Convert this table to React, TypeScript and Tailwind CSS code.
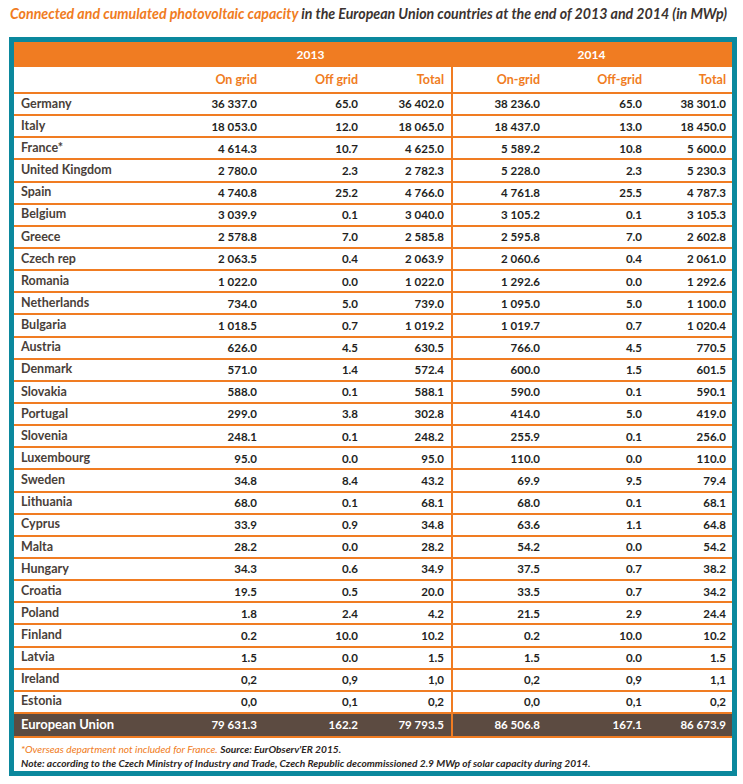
import React from 'react'

type Row = {
  name: string
  v: string[]
}

const rows: Row[] = [
  { name: 'Germany', v: ['36 337.0', '65.0', '36 402.0', '38 236.0', '65.0', '38 301.0'] },
  { name: 'Italy', v: ['18 053.0', '12.0', '18 065.0', '18 437.0', '13.0', '18 450.0'] },
  { name: 'France*', v: ['4 614.3', '10.7', '4 625.0', '5 589.2', '10.8', '5 600.0'] },
  { name: 'United Kingdom', v: ['2 780.0', '2.3', '2 782.3', '5 228.0', '2.3', '5 230.3'] },
  { name: 'Spain', v: ['4 740.8', '25.2', '4 766.0', '4 761.8', '25.5', '4 787.3'] },
  { name: 'Belgium', v: ['3 039.9', '0.1', '3 040.0', '3 105.2', '0.1', '3 105.3'] },
  { name: 'Greece', v: ['2 578.8', '7.0', '2 585.8', '2 595.8', '7.0', '2 602.8'] },
  { name: 'Czech rep', v: ['2 063.5', '0.4', '2 063.9', '2 060.6', '0.4', '2 061.0'] },
  { name: 'Romania', v: ['1 022.0', '0.0', '1 022.0', '1 292.6', '0.0', '1 292.6'] },
  { name: 'Netherlands', v: ['734.0', '5.0', '739.0', '1 095.0', '5.0', '1 100.0'] },
  { name: 'Bulgaria', v: ['1 018.5', '0.7', '1 019.2', '1 019.7', '0.7', '1 020.4'] },
  { name: 'Austria', v: ['626.0', '4.5', '630.5', '766.0', '4.5', '770.5'] },
  { name: 'Denmark', v: ['571.0', '1.4', '572.4', '600.0', '1.5', '601.5'] },
  { name: 'Slovakia', v: ['588.0', '0.1', '588.1', '590.0', '0.1', '590.1'] },
  { name: 'Portugal', v: ['299.0', '3.8', '302.8', '414.0', '5.0', '419.0'] },
  { name: 'Slovenia', v: ['248.1', '0.1', '248.2', '255.9', '0.1', '256.0'] },
  { name: 'Luxembourg', v: ['95.0', '0.0', '95.0', '110.0', '0.0', '110.0'] },
  { name: 'Sweden', v: ['34.8', '8.4', '43.2', '69.9', '9.5', '79.4'] },
  { name: 'Lithuania', v: ['68.0', '0.1', '68.1', '68.0', '0.1', '68.1'] },
  { name: 'Cyprus', v: ['33.9', '0.9', '34.8', '63.6', '1.1', '64.8'] },
  { name: 'Malta', v: ['28.2', '0.0', '28.2', '54.2', '0.0', '54.2'] },
  { name: 'Hungary', v: ['34.3', '0.6', '34.9', '37.5', '0.7', '38.2'] },
  { name: 'Croatia', v: ['19.5', '0.5', '20.0', '33.5', '0.7', '34.2'] },
  { name: 'Poland', v: ['1.8', '2.4', '4.2', '21.5', '2.9', '24.4'] },
  { name: 'Finland', v: ['0.2', '10.0', '10.2', '0.2', '10.0', '10.2'] },
  { name: 'Latvia', v: ['1.5', '0.0', '1.5', '1.5', '0.0', '1.5'] },
  { name: 'Ireland', v: ['0,2', '0,9', '1,0', '0,2', '0,9', '1,1'] },
  { name: 'Estonia', v: ['0,0', '0,1', '0,2', '0,0', '0,1', '0,2'] },
]

const total: Row = {
  name: 'European Union',
  v: ['79 631.3', '162.2', '79 793.5', '86 506.8', '167.1', '86 673.9'],
}

const cols = 'grid grid-cols-[156px_87px_101px_93px_89px_102px_90px]'

function Cells({ v }: { v: string[] }) {
  return (
    <>
      <div className="text-right">{v[0]}</div>
      <div className="text-right">{v[1]}</div>
      <div className="text-right pr-[7px]">{v[2]}</div>
      <div className="text-right self-stretch flex items-center justify-end border-l-2 border-[#f07c22]">{v[3]}</div>
      <div className="text-right">{v[4]}</div>
      <div className="text-right pr-[6px]">{v[5]}</div>
    </>
  )
}

export default function App() {
  return (
    <div className="w-[743px] h-[784px] bg-white pt-[2px] font-['Lato',sans-serif]">
      <div className="pl-[10px] h-[26px] leading-[24px] text-[14.2px] font-bold italic text-[#3b3330] whitespace-nowrap">
        <span className="text-[#f07c22]">Connected and cumulated photovoltaic capacity</span> in the European Union
        countries at the end of 2013 and 2014 (in MWp)
      </div>

      <div className="ml-[9px] mt-[9px] w-[728px] h-[739px] border-[5px] border-[#0b889d] flex flex-col">
        {/* year band */}
        <div className={`${cols} h-[25px] bg-[#f07c22] items-center text-white text-[12px] font-bold`}>
          <div />
          <div className="col-span-3 text-center">2013</div>
          <div className="col-span-3 text-center">2014</div>
        </div>

        {/* column titles */}
        <div className={`${cols} h-[27px] items-center border-b-2 border-[#f07c22] text-[#f07c22] text-[12.5px] font-bold`}>
          <div />
          <div className="text-right pt-[2px]">On grid</div>
          <div className="text-right pt-[2px]">Off grid</div>
          <div className="text-right pr-[7px] pt-[2px]">Total</div>
          <div className="self-stretch flex items-center justify-end border-l-2 border-[#f07c22] pt-[2px]">On-grid</div>
          <div className="text-right pt-[2px]">Off-grid</div>
          <div className="text-right pr-[6px] pt-[2px]">Total</div>
        </div>

        {rows.map((r) => (
          <div
            key={r.name}
            className={`${cols} h-[22.15px] items-center border-b-2 border-[#f07c22] text-[11.5px] font-bold text-[#231f1e]`}
          >
            <div className="pl-[7px] text-[12.5px] text-[#4a3f3a]">{r.name}</div>
            <Cells v={r.v} />
          </div>
        ))}

        <div
          className={`${cols} h-[24px] items-center border-b-2 border-[#f07c22] bg-[#5c4b41] text-[11.5px] font-bold text-white`}
        >
          <div className="pl-[7px] text-[13px]">{total.name}</div>
          <Cells v={total.v} />
        </div>

        <div className="pl-[7px] pt-[4px] text-[10.2px] leading-[14px] italic whitespace-nowrap">
          <div>
            <span className="text-[#f07c22]">*Overseas department not included for France.</span>{' '}
            <span className="font-bold text-[#2b2523]">Source: EurObserv'ER 2015.</span>
          </div>
          <div className="font-bold text-[#2b2523]">
            Note: according to the Czech Ministry of Industry and Trade, Czech Republic decommissioned 2.9 MWp of
            solar capacity during 2014.
          </div>
        </div>
      </div>
    </div>
  )
}
